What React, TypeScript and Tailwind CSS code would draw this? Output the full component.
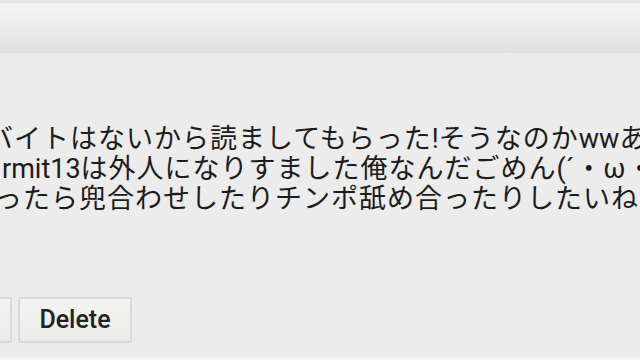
import React from 'react';

type Seg = { t: string; latin?: boolean };

const lines: { segs: Seg[]; indent: string }[] = [
    {
        segs: [{ t: 'バイトはないから読ましてもらった' }, { t: '!', latin: true }, { t: 'そうなのか' }, { t: 'ww', latin: true }, { t: 'あ' }],
        indent: '-ml-[14px]',
    },
    {
        segs: [{ t: 'rmit13', latin: true }, { t: 'は外人になりすました俺なんだごめん' }, { t: '(', latin: true }, { t: '´・ω・`' }, { t: ')', latin: true }],
        indent: 'ml-[2px]',
    },
    {
        segs: [{ t: 'ったら兜合わせしたりチンポ舐め合ったりしたいね' }],
        indent: '-ml-[5px]',
    },
];

const App: React.FC = () => {
    return (
        <div className="w-[640px] h-[360px] overflow-hidden bg-[#ececec] flex flex-col" style={{ fontFamily: 'Roboto, "Noto Sans CJK JP", sans-serif' }}>
            {/* top bar */}
            <div className="h-[53px] shrink-0 border-t-[3px] border-[#e4e4e4] border-b-2 border-b-[#dedede] bg-linear-to-b from-[#f4f4f4] via-[#ececec] to-[#e2e2e2]" />

            {/* comment body */}
            <div className="mt-[71px] overflow-hidden text-[27px] leading-[30px] tracking-[1px] text-[#1c1c1c]">
                {lines.map((line, i) => (
                    <div key={i} className={`whitespace-nowrap ${line.indent}`}>
                        {line.segs.map((s, j) => (
                            <span key={j} className={s.latin ? 'tracking-normal' : ''}>
                                {s.t}
                            </span>
                        ))}
                    </div>
                ))}
            </div>

            {/* actions */}
            <div className="mt-[83px] flex gap-[6px]">
                <button
                    type="button"
                    className="-ml-[88px] w-[100px] h-[46px] rounded-[2px] border-2 border-[#d9d9d9] bg-linear-to-b from-[#f3f3f1] to-[#ebebea] text-[26px] font-medium text-[#222]"
                >
                    Edit
                </button>
                <button
                    type="button"
                    className="w-[114px] h-[46px] rounded-[2px] border-2 border-[#d9d9d9] bg-linear-to-b from-[#f3f3f1] to-[#ebebea] text-[25px] font-medium text-[#222]"
                >
                    Delete
                </button>
            </div>

            <div className="mt-auto h-[5px] bg-linear-to-b from-[#ededed] to-[#f7f7f7]" />
        </div>
    );
};

export default App;
